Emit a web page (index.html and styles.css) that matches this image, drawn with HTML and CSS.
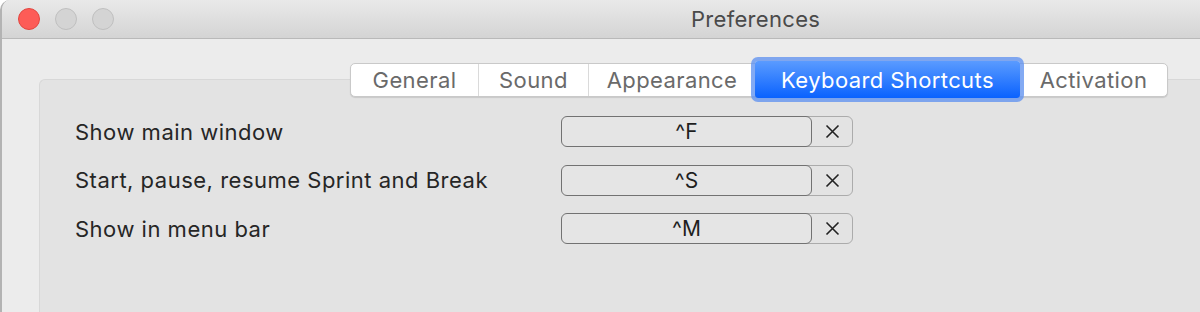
FILE: index.html
```html
<!DOCTYPE html>
<html lang="en">
<head>
    <meta charset="UTF-8">
    <meta name="viewport" content="width=device-width, initial-scale=1.0">
    <title>Preferences</title>
    <link rel="stylesheet" href="styles.css">
</head>
<body>
    <div class="window">
        <div class="titlebar">
            <div class="lights">
                <span class="light close"></span>
                <span class="light"></span>
                <span class="light"></span>
            </div>
            <div class="title">Preferences</div>
        </div>

        <div class="main">
            <div class="tabs">
                <div class="tab tab-general">General</div>
                <div class="tab tab-sound">Sound</div>
                <div class="tab tab-appearance">Appearance</div>
                <div class="tab tab-keys selected">Keyboard Shortcuts</div>
                <div class="tab tab-activation">Activation</div>
            </div>

            <div class="box">
                <div class="row">
                    <div class="label">Show main window</div>
                    <div class="shortcut">
                        <div class="field">^F</div>
                        <div class="clear">
                            <svg width="15" height="15" viewBox="0 0 15 15"><path d="M1.5 1.5 L13.5 13.5 M13.5 1.5 L1.5 13.5" stroke="#222" stroke-width="1.6" fill="none"/></svg>
                        </div>
                    </div>
                </div>
                <div class="row">
                    <div class="label">Start, pause, resume Sprint and Break</div>
                    <div class="shortcut">
                        <div class="field">^S</div>
                        <div class="clear">
                            <svg width="15" height="15" viewBox="0 0 15 15"><path d="M1.5 1.5 L13.5 13.5 M13.5 1.5 L1.5 13.5" stroke="#222" stroke-width="1.6" fill="none"/></svg>
                        </div>
                    </div>
                </div>
                <div class="row">
                    <div class="label">Show in menu bar</div>
                    <div class="shortcut">
                        <div class="field">^M</div>
                        <div class="clear">
                            <svg width="15" height="15" viewBox="0 0 15 15"><path d="M1.5 1.5 L13.5 13.5 M13.5 1.5 L1.5 13.5" stroke="#222" stroke-width="1.6" fill="none"/></svg>
                        </div>
                    </div>
                </div>
            </div>
        </div>
    </div>
</body>
</html>
```

FILE: styles.css
```css
html, body {
    margin: 0;
    padding: 0;
    height: 100%;
    overflow: hidden;
}
body {
    background-color: #ffffff;
    font-family: Inter, "Liberation Sans", Arial, sans-serif;
    color: #222222;
}
.window {
    height: 312px;
    background-color: #ececec;
    border-left: 2px solid #b3b3b3;
    border-top-left-radius: 10px;
    overflow: hidden;
}
.titlebar {
    height: 38px;
    display: flex;
    align-items: center;
    background: linear-gradient(#e9e9e9, #d4d4d4);
    border-bottom: 1px solid #b9b9b9;
}
.lights {
    display: flex;
    gap: 15px;
    padding-left: 16px;
}
.light {
    width: 20px;
    height: 20px;
    border-radius: 50%;
    background-color: #d4d4d4;
    border: 1px solid #bfbfbf;
}
.light.close {
    background-color: #fd5c57;
    border-color: #e2463f;
}
.title {
    margin-left: 577px;
    font-size: 22px;
    color: #4a4a4a;
    letter-spacing: 0.3px;
}
.main {
    padding: 24px 0 0 37px;
}
.tabs {
    position: relative;
    z-index: 1;
    display: flex;
    width: fit-content;
    height: 34px;
    margin-left: 311px;
    margin-bottom: -18px;
    background-color: #ffffff;
    border: 1px solid #c9c9c9;
    border-radius: 5px;
    box-shadow: 0 1px 1px rgba(0, 0, 0, 0.12);
    box-sizing: border-box;
}
.tab {
    display: flex;
    align-items: center;
    justify-content: center;
    font-size: 22px;
    letter-spacing: 0.4px;
    color: #6a6a6a;
    border-right: 1px solid #dadada;
    box-sizing: border-box;
}
.tab-general { width: 128px; }
.tab-sound { width: 110px; }
.tab-appearance { width: 166px; border-right: none; }
.tab-keys { width: 265px; }
.tab-activation { width: 147px; border-right: none; }
.tab.selected {
    margin: -3px 0 -2px 0;
    color: #ffffff;
    background: linear-gradient(#5a9bff, #0a62fe);
    border: none;
    border-radius: 3px;
    box-shadow: 0 0 0 4px rgba(96, 146, 240, 0.78);
}
.box {
    height: 240px;
    background-color: #e3e3e3;
    border: 1px solid #d8d8d8;
    border-right: none;
    border-top-left-radius: 6px;
    padding: 36px 0 0 35px;
    display: flex;
    flex-direction: column;
    gap: 17.5px;
}
.row {
    display: flex;
    align-items: center;
    height: 31px;
}
.label {
    width: 486px;
    font-size: 22px;
    letter-spacing: 0.5px;
    color: #262626;
}
.shortcut {
    display: flex;
}
.field {
    position: relative;
    z-index: 1;
    width: 251px;
    height: 31px;
    box-sizing: border-box;
    border: 1.5px solid #727272;
    border-radius: 6px;
    background-color: #e5e5e5;
    display: flex;
    align-items: center;
    justify-content: center;
    font-size: 21px;
    color: #1e1e1e;
}
.clear {
    width: 53px;
    height: 31px;
    margin-left: -12px;
    padding-left: 12px;
    box-sizing: border-box;
    border: 1px solid #ababab;
    border-radius: 6px;
    display: flex;
    align-items: center;
    justify-content: center;
}
```
